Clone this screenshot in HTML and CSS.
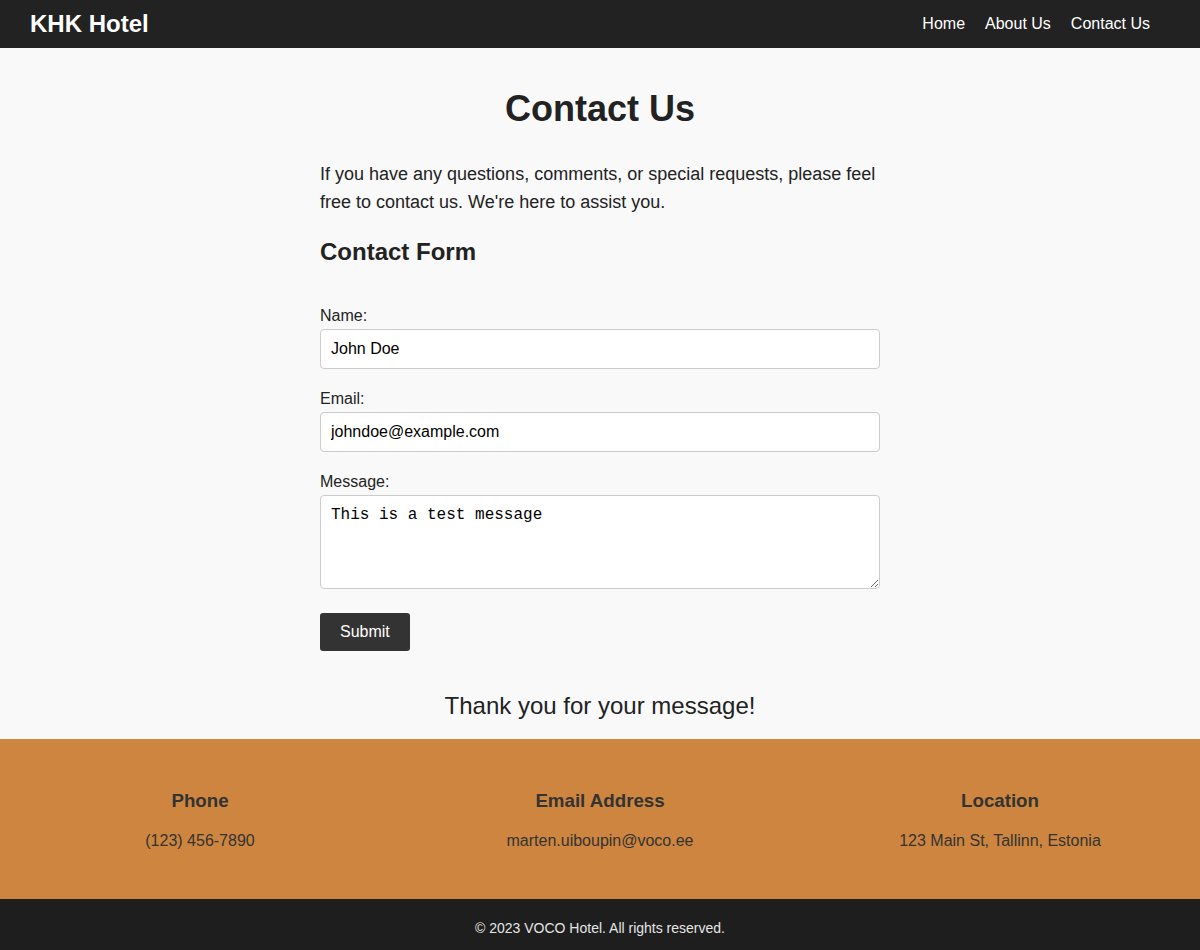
FILE: index.html
```html
<!DOCTYPE html>
<html lang="en">
<head>
<meta charset="utf-8">
<title>Contact Us - KHK Hotel</title>
<link rel="stylesheet" href="styles.css">
</head>
<body>
<header class="site-header">
  <div class="logo">KHK Hotel</div>
  <nav class="nav">
    <a href="#">Home</a>
    <a href="#">About Us</a>
    <a href="#">Contact Us</a>
  </nav>
</header>
<main class="main">
  <h1 class="title">Contact Us</h1>
  <div class="content">
    <p class="intro">If you have any questions, comments, or special requests, please feel free to contact us. We're here to assist you.</p>
    <h2 class="form-title">Contact Form</h2>
    <form class="form">
      <label class="label" for="name">Name:</label>
      <input class="field" id="name" type="text" value="John Doe">
      <label class="label" for="email">Email:</label>
      <input class="field" id="email" type="email" value="johndoe@example.com">
      <label class="label" for="msg">Message:</label>
      <textarea class="area" id="msg">This is a test message</textarea>
      <button class="submit" type="button">Submit</button>
    </form>
  </div>
  <p class="thanks">Thank you for your message!</p>
</main>
<footer class="info">
  <div class="info-col">
    <h3 class="info-title">Phone</h3>
    <p class="info-text">(123) 456-7890</p>
  </div>
  <div class="info-col">
    <h3 class="info-title">Email Address</h3>
    <p class="info-text">marten.uiboupin@voco.ee</p>
  </div>
  <div class="info-col">
    <h3 class="info-title">Location</h3>
    <p class="info-text">123 Main St, Tallinn, Estonia</p>
  </div>
</footer>
<div class="copyright">© 2023 VOCO Hotel. All rights reserved.</div>
</body>
</html>
```
FILE: styles.css
```css
* { box-sizing: border-box; }
html, body { margin: 0; padding: 0; }
body {
  font-family: "Liberation Sans", Arial, sans-serif;
  background: #f9f9f9;
  color: #222;
  line-height: 1.6;
}
.site-header {
  height: 48px;
  background: #222;
  display: flex;
  align-items: center;
  justify-content: space-between;
  padding: 0 50px 0 30px;
}
.logo {
  color: #fff;
  font-weight: bold;
  font-size: 24px;
  line-height: 1;
  margin-top: -1px;
}
.nav { display: flex; gap: 20px; margin-top: -1px; }
.nav a {
  color: #fff;
  text-decoration: none;
  font-size: 16px;
}
.main {
  padding: 32px 0 13px;
}
.title {
  text-align: center;
  font-size: 36px;
  margin: 0;
  line-height: 57.6px;
  color: #222;
}
.content {
  width: 560px;
  margin: 0 auto;
}
.intro {
  font-size: 18px;
  line-height: 28.8px;
  margin: 22px 0 0;
}
.form-title {
  font-size: 24px;
  line-height: 38.4px;
  margin: 16px 0 0;
}
.form {
  display: flex;
  flex-direction: column;
  padding-top: 31px;
}
.label {
  display: block;
  font-size: 16px;
  line-height: 25.6px;
  margin-bottom: 1px;
  color: #222;
}
.field {
  display: block;
  width: 100%;
  height: 40px;
  padding: 10px;
  border: 1px solid #ccc;
  border-radius: 4px;
  background: #fff;
  font-family: "Liberation Sans", Arial, sans-serif;
  font-size: 16px;
  color: #000;
  margin-bottom: 16.4px;
}
.area {
  display: block;
  width: 100%;
  height: 94px;
  padding: 10px;
  border: 1px solid #ccc;
  border-radius: 4px;
  background: #fff;
  font-family: "Liberation Mono", monospace;
  font-size: 16px;
  line-height: 18px;
  color: #000;
  margin-bottom: 24px;
  resize: vertical;
}
.submit {
  align-self: flex-start;
  background: #333;
  color: #fff;
  border: none;
  border-radius: 3px;
  height: 38px;
  padding: 0 20px;
  font-family: "Liberation Sans", Arial, sans-serif;
  font-size: 16px;
}
.thanks {
  text-align: center;
  font-size: 24px;
  line-height: 38.4px;
  margin: 36px 0 0;
  color: #222;
}
.info {
  background: #cd853f;
  display: grid;
  grid-template-columns: repeat(3, 1fr);
  padding: 47px 0 45px;
  text-align: center;
  color: #333;
}
.info-title {
  font-size: 18.72px;
  line-height: 30px;
  margin: 0 0 12px;
}
.info-text {
  font-size: 16px;
  line-height: 26px;
  margin: 0;
}
.copyright {
  background: #1e1e1e;
  color: #e6e6e6;
  text-align: center;
  font-size: 14px;
  line-height: 22px;
  padding: 18px 0 20px;
}
```
